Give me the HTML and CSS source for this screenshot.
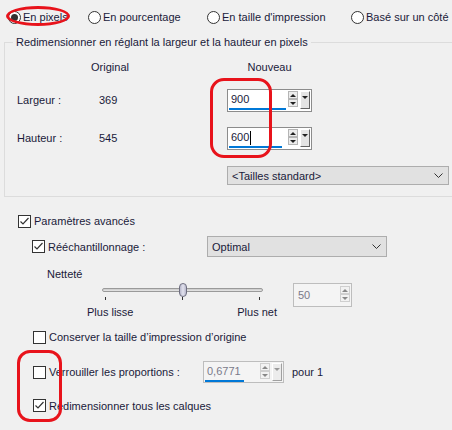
FILE: index.html
```html
<!DOCTYPE html>
<html lang="fr">
<head>
    <meta charset="UTF-8">
    <title>Redimensionner</title>
    <link rel="stylesheet" href="styles.css">
</head>
<body>
    <div class="modes">
        <label class="radio"><span class="circle on"></span>En pixels</label>
        <label class="radio"><span class="circle"></span>En pourcentage</label>
        <label class="radio"><span class="circle"></span>En taille d'impression</label>
        <label class="radio"><span class="circle"></span>Basé sur un côté</label>
    </div>

    <fieldset class="group">
        <legend>Redimensionner en réglant la largeur et la hauteur en pixels</legend>
        <div class="dims">
            <div class="head col-orig">Original</div>
            <div class="head col-new">Nouveau</div>

            <div class="lbl">Largeur :</div>
            <div class="val">369</div>
            <div class="spin col-new">
                <div class="field"><span class="num">900</span><span class="bar" style="width:57px"></span></div>
                <div class="arrows"><span class="up"></span><span class="down"></span></div>
                <span class="drop"></span>
            </div>

            <div class="lbl">Hauteur :</div>
            <div class="val">545</div>
            <div class="spin col-new">
                <div class="field"><span class="num">600<span class="caret"></span></span><span class="bar" style="width:53px"></span></div>
                <div class="arrows"><span class="up"></span><span class="down"></span></div>
                <span class="drop"></span>
            </div>

            <div class="combo std col-new">&lt;Tailles standard&gt;
                <svg width="9" height="5" viewBox="0 0 9 5"><polyline points="0.5,0.5 4.5,4.5 8.5,0.5" fill="none" stroke="#333" stroke-width="1"/></svg>
            </div>
        </div>
    </fieldset>

    <div class="advanced">
        <label class="check row-adv"><span class="box on"><svg width="11" height="11" viewBox="0 0 11 11"><polyline points="1.5,5.5 4,8 9.5,2" fill="none" stroke="#333" stroke-width="1.2"/></svg></span>Paramètres avancés</label>

        <div class="row-resample">
            <label class="check"><span class="box on"><svg width="11" height="11" viewBox="0 0 11 11"><polyline points="1.5,5.5 4,8 9.5,2" fill="none" stroke="#333" stroke-width="1.2"/></svg></span>Rééchantillonnage :</label>
            <div class="combo opt">Optimal
                <svg width="9" height="5" viewBox="0 0 9 5"><polyline points="0.5,0.5 4.5,4.5 8.5,0.5" fill="none" stroke="#333" stroke-width="1"/></svg>
            </div>
        </div>

        <div class="sharp-label">Netteté</div>
        <div class="row-slider">
            <div class="slider">
                <div class="track"><span class="thumb" style="left:calc(50% - 4px)"></span></div>
                <div class="ticks"><i></i><i></i><i></i></div>
                <div class="ends"><span>Plus lisse</span><span>Plus net</span></div>
            </div>
            <div class="spin small disabled">
                <div class="field"><span class="num">50</span></div>
                <div class="arrows"><span class="up"></span><span class="down"></span></div>
            </div>
        </div>

        <label class="check row-keep"><span class="box"></span>Conserver la taille d’impression d’origine</label>

        <div class="row-lock">
            <label class="check"><span class="box"></span>Verrouiller les proportions :</label>
            <div class="spin ratio disabled">
                <div class="field"><span class="num">0,6771</span><span class="bar" style="width:39px"></span></div>
                <div class="arrows"><span class="up"></span><span class="down"></span></div>
                <span class="drop"></span>
            </div>
            <span class="per">pour 1</span>
        </div>

        <label class="check row-all"><span class="box on"><svg width="11" height="11" viewBox="0 0 11 11"><polyline points="1.5,5.5 4,8 9.5,2" fill="none" stroke="#333" stroke-width="1.2"/></svg></span>Redimensionner tous les calques</label>
    </div>

    <!-- annotations rouges par-dessus la boite de dialogue -->
    <div class="mark mark-pixels"></div>
    <div class="mark mark-values"></div>
    <div class="mark mark-boxes"></div>
</body>
</html>
```

FILE: styles.css
```css
body {
    margin: 0;
    width: 452px;
    height: 430px;
    overflow: hidden;
    position: relative;
    background: #f0f0f0;
    color: #1a1a3a;
    font-family: "Liberation Sans", Arial, sans-serif;
    font-size: 11px;
    line-height: 14px;
}
label {
    display: flex;
    align-items: center;
    white-space: nowrap;
}

/* modes */
.modes {
    display: grid;
    grid-template-columns: 80px 119px 144px auto;
    align-items: center;
    height: 34px;
    padding-left: 8px;
}
.circle {
    width: 11px;
    height: 11px;
    border: 1px solid #333;
    border-radius: 50%;
    background: #fff;
    margin-right: 2px;
    display: flex;
    justify-content: center;
    align-items: center;
}
.circle.on::after {
    content: "";
    width: 7px;
    height: 7px;
    border-radius: 50%;
    background: #333;
}

/* group box */
.group {
    box-sizing: border-box;
    width: 470px;
    margin: 1px 0 0 4px;
    padding: 0 0 11px 12px;
    border: 1px solid #dcdcdc;
    height: 162px;
}
.group legend {
    padding: 0 3px;
    margin-left: -4px;
    line-height: 14px;
}
.dims {
    display: grid;
    grid-template-columns: 63px 60px 87px 85px;
    grid-template-rows: 31px 38px 39px 19px;
    margin-top: 9px;
}
.head {
    text-align: center;
    line-height: 18px;
}
.col-orig { grid-column: 2; }
.col-new { grid-column: 4; }
.lbl, .val {
    line-height: 23px;
}
.val {
    padding-left: 19px;
}

/* spin boxes */
.spin {
    box-sizing: border-box;
    display: flex;
    align-items: flex-start;
    height: 23px;
    border: 1px solid #8c8c8c;
    background: #fff;
}
.field {
    flex: 1;
    display: flex;
    flex-direction: column;
    padding: 2px 0 0 1px;
}
.num {
    padding-left: 2px;
    line-height: 15px;
    display: flex;
    align-items: center;
}
.caret {
    width: 1px;
    height: 14px;
    background: #000;
    margin-left: 1px;
}
.bar {
    height: 2px;
    margin-top: 1px;
    background: #0078d7;
}
.arrows {
    display: flex;
    flex-direction: column;
    margin: 1px 1px 0 0;
}
.arrows span {
    box-sizing: border-box;
    width: 10px;
    height: 8px;
    border: 1px solid #b5b5b5;
    background: #ececec;
    display: flex;
    justify-content: center;
    align-items: center;
}
.arrows .up::after {
    content: "";
    border: 3px solid transparent;
    border-bottom: 3px solid #222;
    border-top: 0;
}
.arrows .down::after {
    content: "";
    border: 3px solid transparent;
    border-top: 3px solid #222;
    border-bottom: 0;
}
.drop {
    box-sizing: border-box;
    width: 10px;
    height: 18px;
    margin: 1px 1px 0 1px;
    background: #e4e4e4;
    border-top: 1px solid #fff;
    border-left: 1px solid #fff;
    border-right: 1px solid #646464;
    border-bottom: 1px solid #646464;
    display: flex;
    justify-content: center;
    padding-top: 4px;
}
.drop::after {
    content: "";
    height: 0;
    border: 3px solid transparent;
    border-top: 3px solid #222;
    border-bottom: 0;
}
.spin.disabled {
    border-color: #bdbdbd;
    background: #f4f4f4;
}
.spin.disabled .num {
    color: #7a7a8a;
}
.spin.disabled .arrows span {
    background: #f2f2f2;
    border-color: #cfcfcf;
}
.spin.disabled .arrows .up::after { border-bottom-color: #888; }
.spin.disabled .arrows .down::after { border-top-color: #888; }
.spin.disabled .drop {
    border-right-color: #a0a0a0;
    border-bottom-color: #a0a0a0;
    background: #ececec;
}
.spin.disabled .drop::after { border-top-color: #999; }

/* combos */
.combo {
    box-sizing: border-box;
    display: flex;
    justify-content: space-between;
    align-items: center;
    padding: 0 5px 0 4px;
    background: #e1e1e1;
    border: 1px solid #adadad;
}
.combo.std {
    width: 222px;
    height: 19px;
}
.combo.opt {
    width: 180px;
    height: 21px;
}

/* advanced part */
.advanced {
    display: flex;
    flex-direction: column;
    padding-top: 14px;
}
.check .box {
    box-sizing: border-box;
    width: 13px;
    height: 13px;
    border: 1px solid #333;
    background: #fff;
    margin-right: 3px;
    display: flex;
    justify-content: center;
    align-items: center;
}
.row-adv {
    height: 20px;
    padding-left: 18px;
}
.row-resample {
    display: flex;
    align-items: center;
    margin-top: 5px;
    padding-left: 32px;
}
.row-resample .check {
    width: 175px;
}
.sharp-label {
    margin-top: 9px;
    padding-left: 47px;
    line-height: 16px;
}
.row-slider {
    display: flex;
    align-items: flex-start;
    margin-top: 1px;
    padding-left: 102px;
    height: 37px;
}
.slider {
    width: 161px;
    margin-top: 5px;
    margin-right: 30px;
}
.track {
    position: relative;
    height: 4px;
    border: 1px solid #9a9a9a;
    border-radius: 3px;
    background: linear-gradient(#c8c8c8, #e8e8e8);
    box-sizing: border-box;
}
.thumb {
    position: absolute;
    top: -6px;
    width: 8px;
    height: 14px;
    box-sizing: border-box;
    border: 1px solid #6e6e80;
    border-radius: 4px;
    background: linear-gradient(90deg, #b9b9cc, #e2e2ee, #b9b9cc);
}
.ticks {
    display: flex;
    justify-content: space-between;
    padding: 0 3px;
    margin-top: 5px;
}
.ticks i {
    width: 1px;
    height: 3px;
    background: #333;
}
.ends {
    display: flex;
    justify-content: space-between;
    margin: 5px -14px 0 -15px;
}
.spin.small {
    width: 59px;
    height: 24px;
}
.spin.small .num {
    padding-left: 3px;
    line-height: 18px;
}
.spin.small .arrows {
    margin-top: 2px;
}
.row-keep {
    height: 18px;
    margin-top: 8px;
    padding-left: 33px;
}
.row-lock {
    display: flex;
    align-items: center;
    height: 22px;
    margin-top: 15px;
    padding-left: 33px;
}
.row-lock .check {
    width: 170px;
}
.spin.ratio {
    width: 81px;
    height: 22px;
}
.per {
    margin-left: 8px;
}
.row-all {
    height: 19px;
    margin-top: 13px;
    padding-left: 33px;
}

/* red annotations */
.mark {
    position: absolute;
    box-sizing: border-box;
    border: 3px solid #e8131b;
}
.mark-pixels {
    left: 6px;
    top: 6px;
    width: 64px;
    height: 20px;
    border-radius: 32px / 10px;
}
.mark-values {
    left: 210px;
    top: 78px;
    width: 62px;
    height: 80px;
    border-radius: 14px;
}
.mark-boxes {
    left: 17px;
    top: 350px;
    width: 45px;
    height: 72px;
    border-radius: 13px;
}
```
